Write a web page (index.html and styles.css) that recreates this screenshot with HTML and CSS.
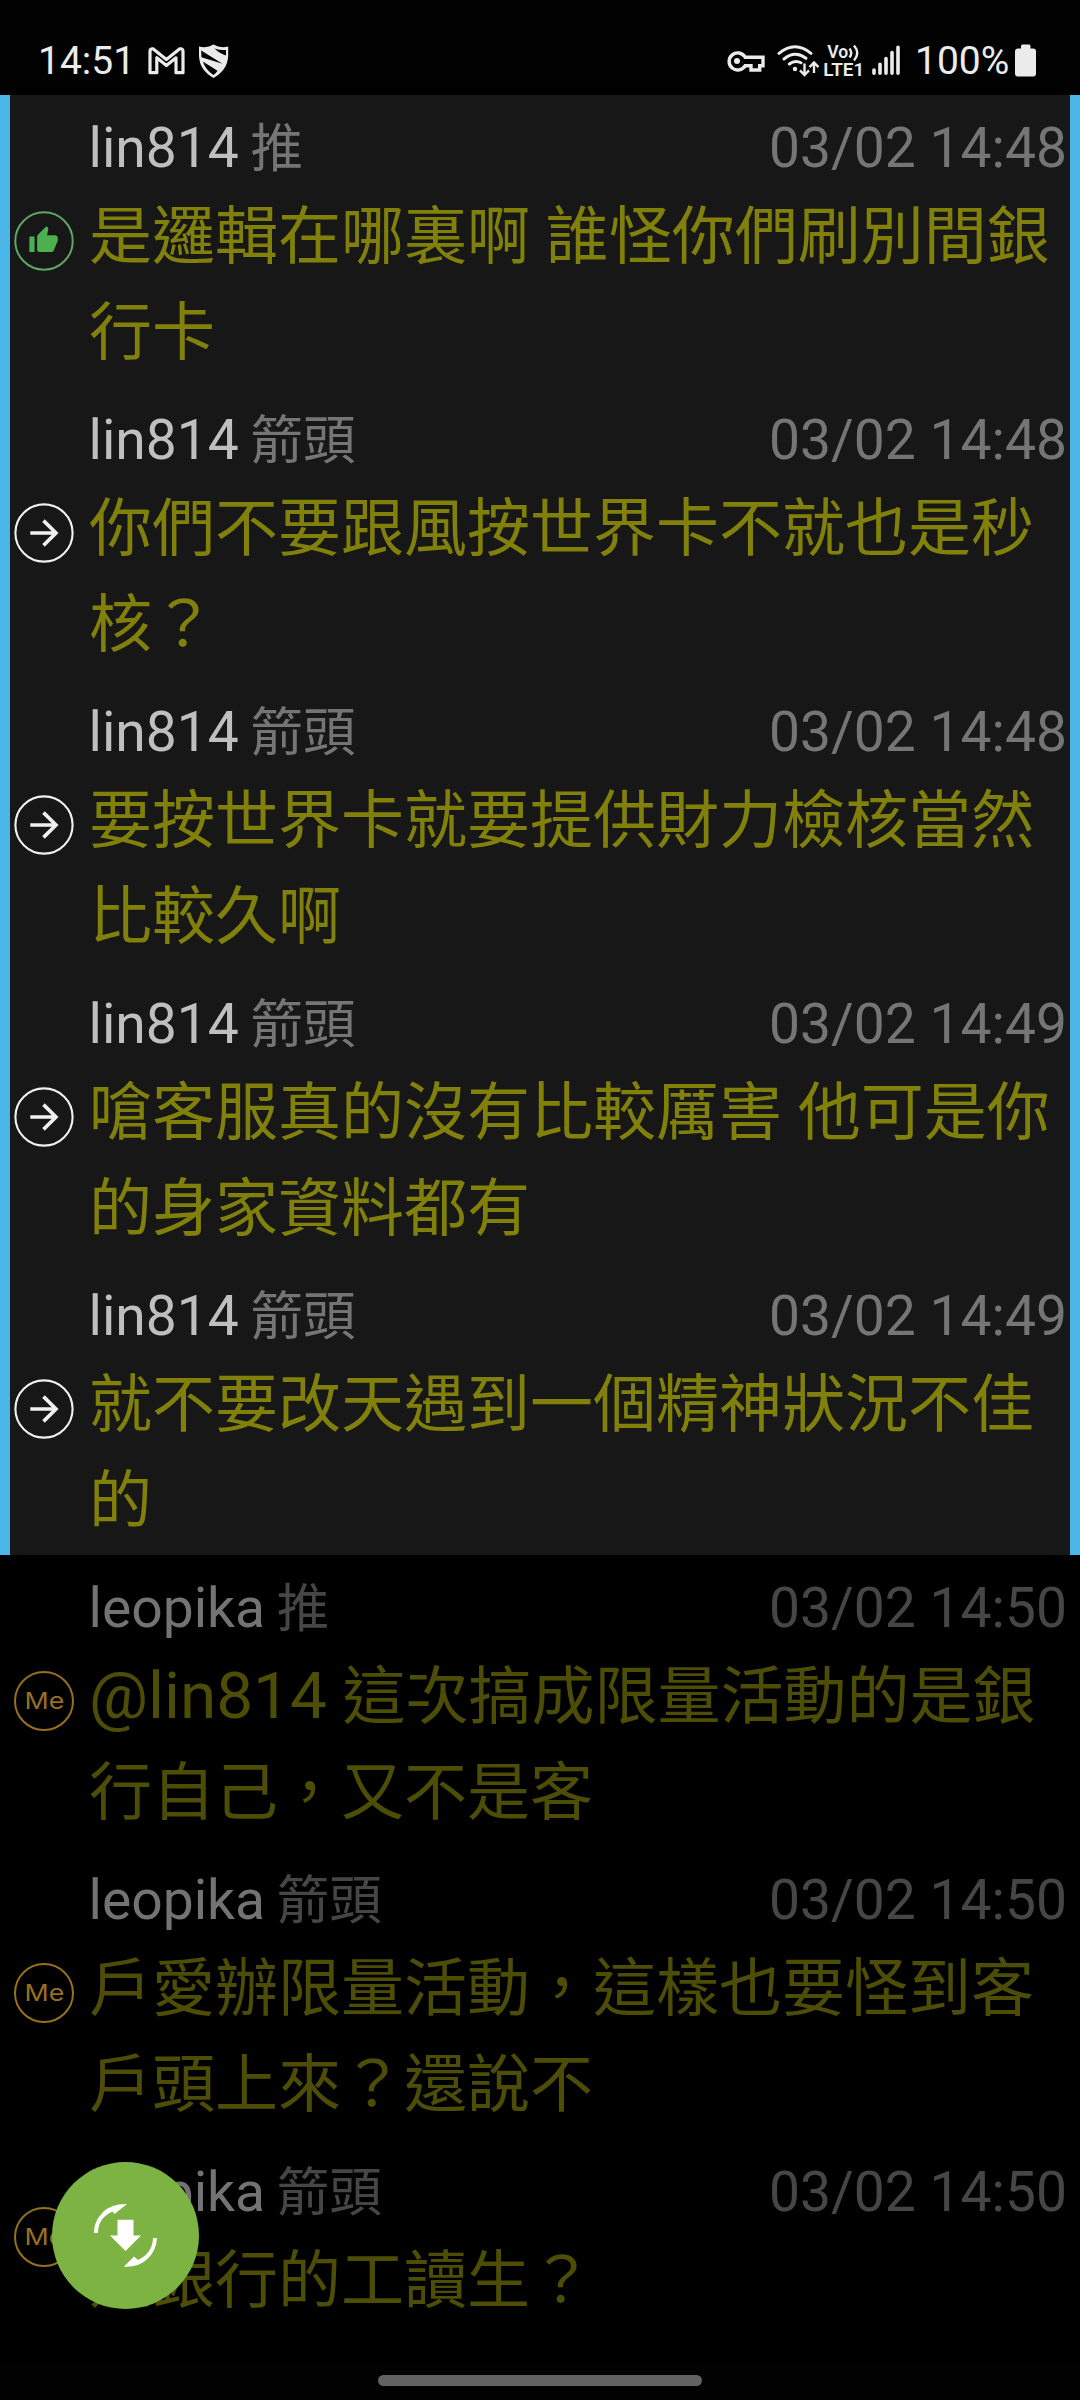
FILE: index.html
```html
<!DOCTYPE html>
<html lang="zh-Hant">
<head>
<meta charset="utf-8">
<title>推文</title>
<link rel="stylesheet" href="styles.css">
</head>
<body>
<svg class="defs" width="0" height="0" aria-hidden="true">
  <symbol id="push" viewBox="0 0 60 60">
    <circle cx="30" cy="30" r="28.7" fill="none" stroke="#5fa563" stroke-width="2"/>
    <path transform="translate(14.1 13.9) scale(1.29)" fill="#4caf50" d="M1 21h4V9H1v12zm22-11c0-1.1-.9-2-2-2h-6.310l.95-4.570.03-.32c0-.41-.17-.79-.44-1.060L14.170 1 7.590 7.590C7.220 7.950 7 8.450 7 9v10c0 1.100.9 2 2 2h9c.83 0 1.540-.5 1.840-1.220l3.020-7.050c.09-.23.14-.47.14-.73v-2z"/>
  </symbol>
  <symbol id="arrow" viewBox="0 0 60 60">
    <circle cx="30" cy="30" r="28.6" fill="none" stroke="#f0f0f0" stroke-width="2.1"/>
    <path d="M16.3 30H41M29.5 17.6L42 30L29.5 42.4" fill="none" stroke="#f0f0f0" stroke-width="3.6"/>
  </symbol>
</svg>

<header class="status">
  <span class="clock">14:51</span>
  <svg class="notify" width="95" height="95" viewBox="140 0 95 95">
    <path d="M150 72.7V51.5Q150 48.3 153 48.8L166.4 59.6L179.8 48.8Q183 48.3 183 51.5V72.7H176V57.8L166.4 65.5L156.8 57.8V72.7Z" fill="none" stroke="#ebebeb" stroke-width="3.2" stroke-linejoin="round"/>
    <path d="M199 46.5Q207 48.5 213.5 44.5Q220 48.5 228.2 46.5V56Q227.5 70 213.5 78Q199.5 70 199 56Z" fill="#ebebeb"/>
    <path d="M201.200 50.500L222.500 63.800L201.400 57.200Z M202.800 61.500L217.500 70.800Q216 73.500 213.400 75Q205.800 70 202.800 61.500Z M214.500 48.500Q220 50.500 226 50V55.500Q219.500 53.500 214.500 48.500Z" fill="#020202"/>
  </svg>
  <svg class="signals" width="190" height="95" viewBox="720 0 190 95">
    <g fill="none" stroke="#ebebeb">
      <path d="M745.2 57.2H763V65.7H759.7V70H751V65.7H745.2A8.6 8.6 0 1 1 745.2 57.2Z" stroke-width="3.4"/>
      <circle cx="737" cy="61" r="3" fill="#ebebeb" stroke="none"/>
      <path d="M779 53.3Q795 40.3 811 53.3M784 59Q795 50 806 58.3M789.3 64Q795 59.6 801 62.8" stroke-width="3" stroke-linecap="round"/>
      <circle cx="795" cy="69" r="2.2" fill="#ebebeb" stroke="none"/>
      <path d="M804.5 63.5V74M800 70.3L804.5 75L809 70.3M814 73V63M809.5 67.2L814 62.5L818.5 67.2" stroke-width="2.4"/>
      <path d="M849.5 48.500Q853 53 849.500 57.500M854 45.500Q860.500 53 854 60.500" stroke-width="2.4"/>
    </g>
    <text x="827.3" y="58.2" class="net" textLength="21" lengthAdjust="spacingAndGlyphs">Vo</text>
    <text x="823.200" y="75.800" class="net" textLength="41" lengthAdjust="spacingAndGlyphs">LTE1</text>
    <path d="M874 70V73.2M880 64.3V73.2M886 58.5V73.2M892 52.5V73.2M898 47.3V73.2" stroke="#ebebeb" stroke-width="3.6" stroke-linecap="round"/>
  </svg>
  <span class="percent">100%</span>
  <svg width="30" height="95" viewBox="1010 0 30 95">
    <path d="M1021 48.500V46Q1021 44.500 1022.500 44.500H1029Q1030.500 44.500 1030.500 46V48.500H1033Q1036 48.500 1036 51.500V73.500Q1036 76.500 1033 76.500H1018Q1015 76.500 1015 73.500V51.500Q1015 48.500 1018 48.500Z" fill="#ebebeb"/>
  </svg>
</header>

<main>
  <section class="group highlighted">
    <article class="row">
      <svg class="badge"><use href="#push"/></svg>
      <div class="body">
        <div class="meta"><span class="name">lin814 <i>推</i></span><time>03/02 14:48</time></div>
        <p>是邏輯在哪裏啊 誰怪你們刷別間銀行卡</p>
      </div>
    </article>
    <article class="row">
      <svg class="badge"><use href="#arrow"/></svg>
      <div class="body">
        <div class="meta"><span class="name">lin814 <i>箭頭</i></span><time>03/02 14:48</time></div>
        <p>你們不要跟風按世界卡不就也是秒核？</p>
      </div>
    </article>
    <article class="row">
      <svg class="badge"><use href="#arrow"/></svg>
      <div class="body">
        <div class="meta"><span class="name">lin814 <i>箭頭</i></span><time>03/02 14:48</time></div>
        <p>要按世界卡就要提供財力檢核當然比較久啊</p>
      </div>
    </article>
    <article class="row">
      <svg class="badge"><use href="#arrow"/></svg>
      <div class="body">
        <div class="meta"><span class="name">lin814 <i>箭頭</i></span><time>03/02 14:49</time></div>
        <p>嗆客服真的沒有比較厲害 他可是你的身家資料都有</p>
      </div>
    </article>
    <article class="row">
      <svg class="badge"><use href="#arrow"/></svg>
      <div class="body">
        <div class="meta"><span class="name">lin814 <i>箭頭</i></span><time>03/02 14:49</time></div>
        <p>就不要改天遇到一個精神狀況不佳的</p>
      </div>
    </article>
  </section>
  <section class="group dimmed">
    <article class="row">
      <div class="badge me"><span>Me</span></div>
      <div class="body">
        <div class="meta"><span class="name">leopika <i>推</i></span><time>03/02 14:50</time></div>
        <p><span class="mention">@lin814</span> 這次搞成限量活動的是銀行自己，又不是客</p>
      </div>
    </article>
    <article class="row">
      <div class="badge me"><span>Me</span></div>
      <div class="body">
        <div class="meta"><span class="name">leopika <i>箭頭</i></span><time>03/02 14:50</time></div>
        <p>戶愛辦限量活動，這樣也要怪到客戶頭上來？還說不</p>
      </div>
    </article>
    <article class="row">
      <div class="badge me"><span>Me</span></div>
      <div class="body">
        <div class="meta"><span class="name">leopika <i>箭頭</i></span><time>03/02 14:50</time></div>
        <p>是銀行的工讀生？</p>
      </div>
    </article>
  </section>
</main>

<button class="fab" aria-label="更新">
  <svg width="147" height="147" viewBox="0 0 147 147">
    <g fill="#fff">
      <path d="M41.800 71Q42 59 51 50Q60 41.500 75 42L62.500 52L60.500 49.500Q46 56 46 71Z"/>
      <path d="M105 76Q104.500 88 96 96.500Q87 105.500 71.700 104.800L82 94.500L86 98Q100.500 91 101 76Z"/>
      <path d="M65.500 57.700H81.500V73.500H89L73.500 89L58 73.500H65.500Z"/>
    </g>
  </svg>
</button>
<footer class="navbar"><span class="pill"></span></footer>
</body>
</html>
```
FILE: styles.css
```css
* { box-sizing: border-box; }
body {
  margin: 0;
  width: 1080px;
  height: 2400px;
  display: flex;
  flex-direction: column;
  position: relative;
  overflow: hidden;
  background: #000;
  font-family: Roboto, "Noto Sans CJK TC", sans-serif;
}
svg { display: block; flex: none; }
.defs { position: absolute; }

.status {
  flex: none;
  height: 95px;
  display: flex;
  background: linear-gradient(#020202 88px, #000 88px);
  padding-left: 38px;
  color: #ebebeb;
  font-size: 39px;
  line-height: 122px;
}
.clock { width: 102px; }
.signals { margin-left: 485px; }
.percent { width: 100px; padding-left: 5px; }
.net { font: 600 17.5px Roboto, sans-serif; fill: #ebebeb; }

main { flex: 1; min-height: 0; overflow: hidden; }
.highlighted {
  background: #171717;
  border: solid #4cb5e7;
  border-width: 0 10px;
}
.dimmed { padding: 0 10px; }
.row {
  display: flex;
  align-items: center;
  padding: 0 3px 0 4px;
}
.badge { width: 60px; height: 60px; flex: none; }
.body { flex: 1; margin-left: 14.5px; padding: 11px 0 6px; }
.meta {
  height: 83px;
  display: flex;
  justify-content: space-between;
  font-size: 55.2px;
  line-height: 85px;
  color: #757575;
}
.name { color: #bfbfbf; }
.name i {
  margin-left: -2px;
  font-style: normal;
  font-size: 52.5px;
  line-height: 1;
  color: #757575;
}
p {
  margin: 0;
  padding-left: .5px;
  font-size: 63px;
  line-height: 96px;
  color: #80800a;
}
.mention { font-size: 65.7px; line-height: 1; }
.dimmed .meta, .dimmed .name i { color: #464646; }
.dimmed .name { color: #737373; }
.dimmed p { color: #4d4d06; }
.me {
  display: flex;
  align-items: center;
  justify-content: center;
  border: 2px solid #96701f;
  border-radius: 50%;
  font: 400 23.5px/1 Inter, sans-serif;
  color: #96701f;
}
.me span { transform: scaleX(1.14); }

.fab {
  position: absolute;
  left: 52px;
  top: 2162px;
  width: 147px;
  height: 147px;
  padding: 0;
  border: 0;
  border-radius: 50%;
  background: #7cb342;
}
.navbar {
  flex: none;
  height: 39px;
  display: flex;
  justify-content: center;
  padding-top: 14px;
  background: #020202;
}
.pill { width: 324px; height: 11px; border-radius: 6px; background: #626262; }
```
